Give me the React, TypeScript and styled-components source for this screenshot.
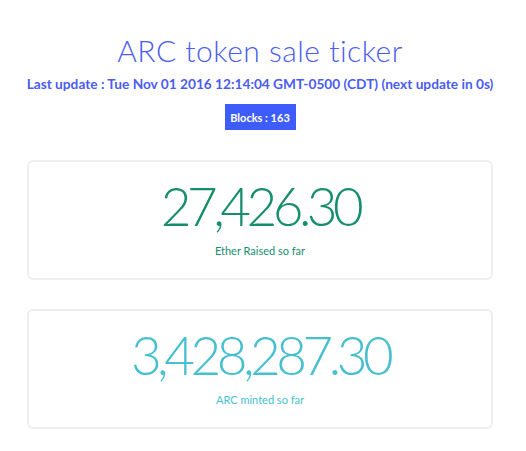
import styled, { createGlobalStyle } from 'styled-components'

const GlobalStyle = createGlobalStyle`
    html, body {
        margin: 0;
        padding: 0;
        background: #ffffff;
        font-family: "Lato", "Open Sans", sans-serif;
    }
`

const Page = styled.div`
    padding: 32px 33px 20px 27px;
    display: flex;
    flex-direction: column;
    align-items: center;
`

const Title = styled.h1`
    margin: 0;
    font-size: 30px;
    line-height: 36px;
    font-weight: 300;
    letter-spacing: 0.5px;
    color: #4b5cf2;
`

const LastUpdate = styled.h4`
    margin: 6px 0 0;
    font-size: 13.7px;
    line-height: 20px;
    font-weight: 700;
    white-space: nowrap;
    color: #4b5cf2;
`

const Badge = styled.span`
    margin-top: 10px;
    display: flex;
    align-items: center;
    justify-content: center;
    width: 71px;
    height: 26px;
    background: #3e5bfb;
    color: #ffffff;
    font-size: 11px;
    font-weight: 700;
`

const Card = styled.div<{ $color: string; $top: number }>`
    margin-top: ${p => p.$top}px;
    align-self: stretch;
    height: 116px;
    border: 2px solid #efefef;
    border-radius: 6px;
    display: flex;
    flex-direction: column;
    align-items: center;
    color: ${p => p.$color};
`

const Amount = styled.div`
    margin-top: 14px;
    font-size: 53px;
    line-height: 60px;
    font-weight: 300;
    letter-spacing: -4.5px;
`

const Caption = styled.div`
    margin-top: 8px;
    font-size: 11px;
    line-height: 14px;
`

export default function App() {
    return (
        <>
            <GlobalStyle />
            <Page>
                <Title>ARC token sale ticker</Title>
                <LastUpdate>
                    Last update : Tue Nov 01 2016 12:14:04 GMT-0500 (CDT) (next update in 0s)
                </LastUpdate>
                <Badge>Blocks : 163</Badge>
                <Card $color="#168e6d" $top={30}>
                    <Amount>27,426.30</Amount>
                    <Caption>Ether Raised so far</Caption>
                </Card>
                <Card $color="#46bfcf" $top={29}>
                    <Amount>3,428,287.30</Amount>
                    <Caption>ARC minted so far</Caption>
                </Card>
            </Page>
        </>
    )
}
